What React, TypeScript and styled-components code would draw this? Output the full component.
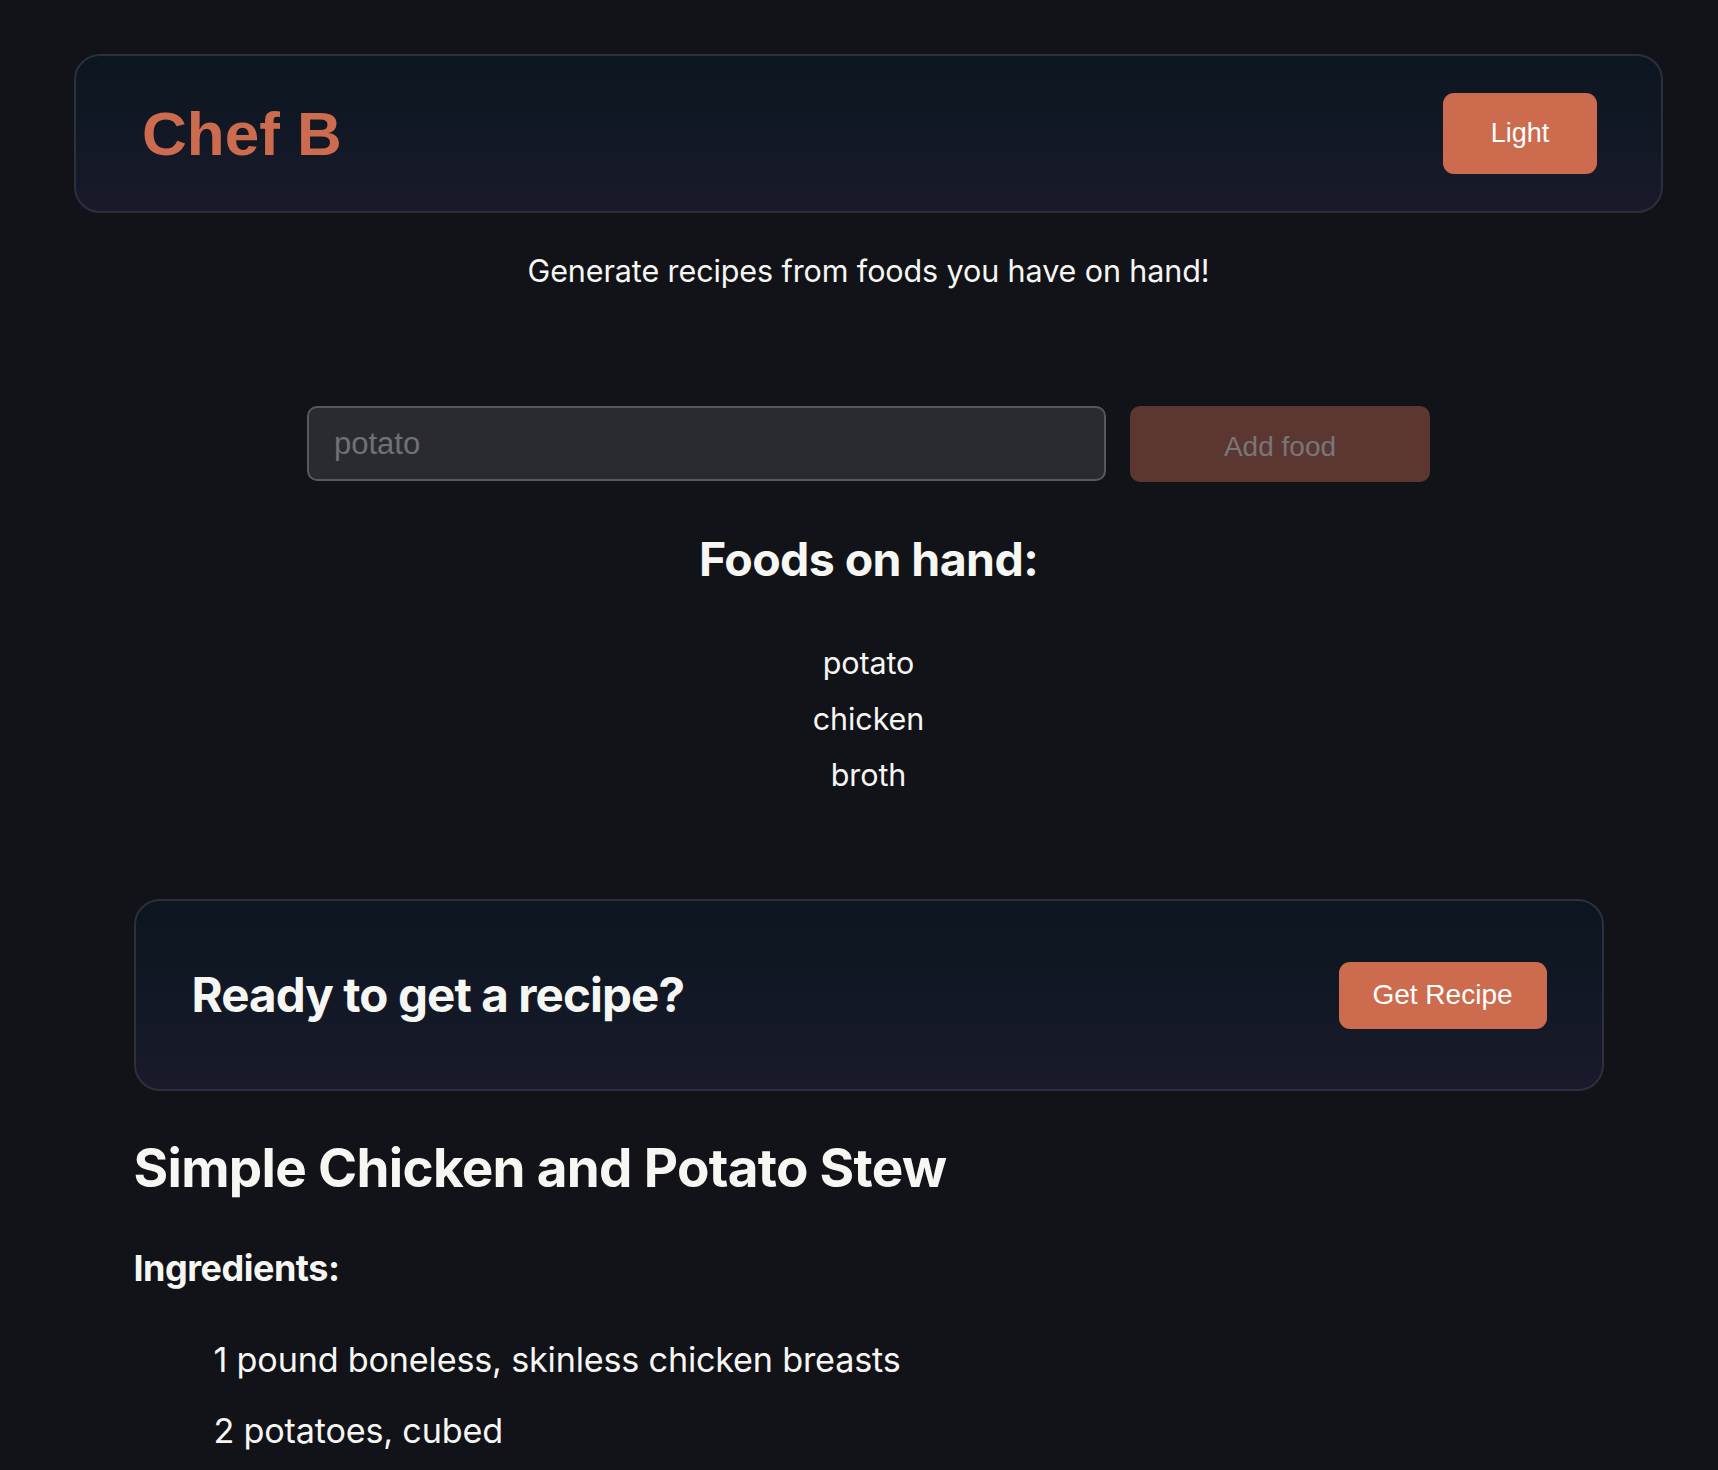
import React from "react";
import styled, { createGlobalStyle } from "styled-components";

const GlobalStyle = createGlobalStyle`
  html, body {
    margin: 0;
    padding: 0;
    background: #121219;
  }
  body {
    font-family: Inter, "Noto Sans", sans-serif;
    color: #f6f6f2;
  }
  * { box-sizing: border-box; }
`;

const Page = styled.div`
  padding: 54px 55px 0 74px;
  display: flex;
  flex-direction: column;
  align-items: center;
`;

const Header = styled.header`
  width: 100%;
  height: 159px;
  display: flex;
  align-items: center;
  justify-content: space-between;
  padding: 0 64px 0 66px;
  border: 2px solid #2c303c;
  border-radius: 26px;
  background: linear-gradient(180deg, #0b1620 0%, #191a2b 100%);
`;

const Logo = styled.h1`
  margin: 0;
  font-family: "Liberation Sans", Arial, sans-serif;
  font-weight: 700;
  font-size: 62px;
  line-height: 1;
  color: #cd6b4f;
`;

const AccentButton = styled.button<{ $w: number; $h: number; $size: number }>`
  width: ${(p) => p.$w}px;
  height: ${(p) => p.$h}px;
  border: none;
  border-radius: 11px;
  background: #cd6b4f;
  color: #ffffff;
  font-family: "Liberation Sans", Arial, sans-serif;
  font-size: ${(p) => p.$size}px;
  cursor: pointer;
  padding: 0;
`;

const Subtitle = styled.p`
  margin: 40px 0 0;
  font-size: 30.5px;
  line-height: 36px;
  letter-spacing: -0.1px;
  text-align: center;
  color: #f6f6f2;
`;

const Form = styled.form`
  margin-top: 117px;
  display: flex;
  gap: 24px;
`;

const Input = styled.input`
  width: 799px;
  height: 75px;
  border: 2px solid #56585e;
  border-radius: 10px;
  background: #2a2b31;
  padding: 0 25px;
  font-family: "Liberation Sans", Arial, sans-serif;
  font-size: 31px;
  color: #f6f6f2;
  outline: none;
  &::placeholder {
    color: #707176;
  }
`;

const DisabledButton = styled.button`
  width: 300px;
  height: 76px;
  border: none;
  border-radius: 10px;
  background: #5c3630;
  color: #77777a;
  font-family: "Liberation Sans", Arial, sans-serif;
  font-size: 28px;
  padding: 6px 0 0;
`;

const SectionHeading = styled.h2`
  margin: 50px 0 0;
  font-size: 46.5px;
  line-height: 54px;
  font-weight: 700;
  letter-spacing: -0.6px;
  text-align: center;
  color: #f6f6f2;
`;

const FoodList = styled.ul`
  margin: 49px 0 0;
  padding: 0;
  list-style: none;
  text-align: center;
`;

const FoodItem = styled.li`
  font-size: 30.5px;
  line-height: 56px;
  letter-spacing: -0.1px;
  color: #f6f6f2;
`;

const RecipeCard = styled.section`
  margin-top: 96px;
  width: 1470px;
  height: 192px;
  display: flex;
  align-items: center;
  justify-content: space-between;
  padding: 0 55px 0 56px;
  border: 2px solid #2c303c;
  border-radius: 26px;
  background: linear-gradient(180deg, #0b1620 0%, #191a2b 100%);
`;

const CardTitle = styled.h2`
  margin: 0;
  font-size: 47.5px;
  line-height: 54px;
  font-weight: 700;
  letter-spacing: -0.9px;
  color: #f6f6f2;
`;

const Recipe = styled.article`
  width: 1470px;
`;

const RecipeTitle = styled.h2`
  margin: 45px 0 0;
  font-size: 53px;
  line-height: 64px;
  font-weight: 700;
  letter-spacing: -0.7px;
  color: #f6f6f2;
`;

const SubHeading = styled.h3`
  margin: 48px 0 0;
  font-size: 36px;
  line-height: 40px;
  font-weight: 700;
  letter-spacing: -0.5px;
  color: #f6f6f2;
`;

const IngredientList = styled.ul`
  margin: 52px 0 0;
  padding: 0 0 0 80px;
  list-style: none;
  display: flex;
  flex-direction: column;
  gap: 31px;
`;

const Ingredient = styled.li`
  font-size: 34.2px;
  line-height: 40px;
  letter-spacing: -0.2px;
  color: #f6f6f2;
`;

export default function App() {
  const foods = ["potato", "chicken", "broth"];
  const ingredients = [
    "1 pound boneless, skinless chicken breasts",
    "2 potatoes, cubed",
  ];
  return (
    <>
      <GlobalStyle />
      <Page>
        <Header>
          <Logo>Chef B</Logo>
          <AccentButton $w={154} $h={81} $size={27}>
            Light
          </AccentButton>
        </Header>
        <Subtitle>Generate recipes from foods you have on hand!</Subtitle>
        <Form onSubmit={(e) => e.preventDefault()}>
          <Input type="text" placeholder="potato" aria-label="Add food" />
          <DisabledButton disabled>Add food</DisabledButton>
        </Form>
        <SectionHeading>Foods on hand:</SectionHeading>
        <FoodList>
          {foods.map((f) => (
            <FoodItem key={f}>{f}</FoodItem>
          ))}
        </FoodList>
        <RecipeCard>
          <CardTitle>Ready to get a recipe?</CardTitle>
          <AccentButton $w={208} $h={67} $size={28}>
            Get Recipe
          </AccentButton>
        </RecipeCard>
        <Recipe>
          <RecipeTitle>Simple Chicken and Potato Stew</RecipeTitle>
          <SubHeading>Ingredients:</SubHeading>
          <IngredientList>
            {ingredients.map((i) => (
              <Ingredient key={i}>{i}</Ingredient>
            ))}
          </IngredientList>
        </Recipe>
      </Page>
    </>
  );
}
